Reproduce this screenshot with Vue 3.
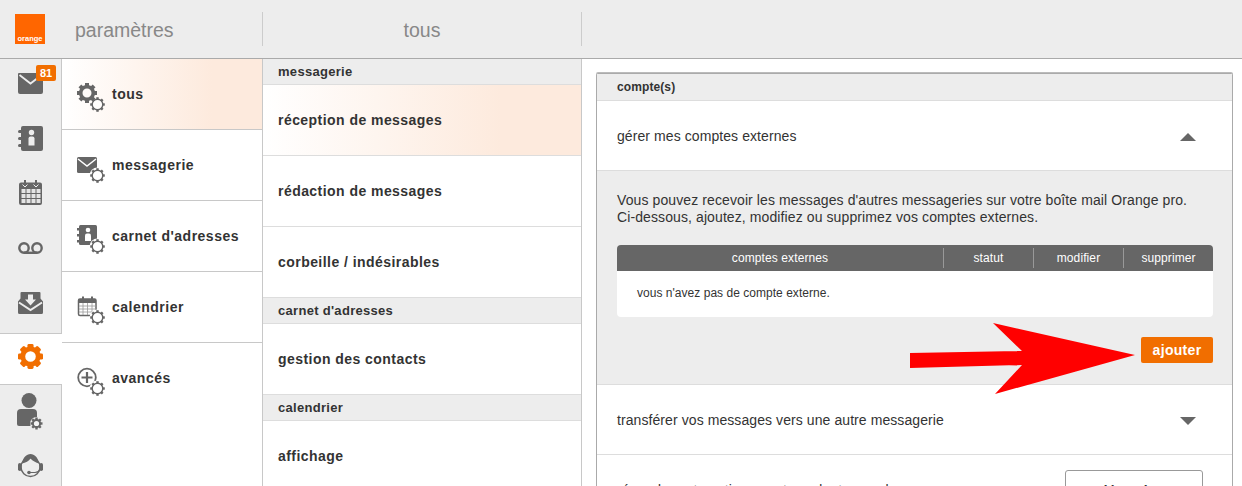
<script setup>
const settings = [
  { label: 'tous', icon: 'gear', active: true },
  { label: 'messagerie', icon: 'mail' },
  { label: "carnet d'adresses", icon: 'book' },
  { label: 'calendrier', icon: 'cal' },
  { label: 'avancés', icon: 'plus' },
]
const groups = [
  { title: 'messagerie', items: [
    { label: 'réception de messages', active: true },
    { label: 'rédaction de messages' },
    { label: 'corbeille / indésirables' },
  ] },
  { title: "carnet d'adresses", items: [{ label: 'gestion des contacts' }] },
  { title: 'calendrier', items: [{ label: 'affichage' }] },
]
const teeth = [0, 45, 90, 135, 180, 225, 270, 315]
const calCells = []
for (let r = 0; r < 3; r++) for (let c = 0; c < 4; c++) calCells.push({ x: 2.5 + c * 5, y: 9 + r * 5 })
</script>

<template>
  <div class="page">
    <header class="top">
      <div class="brand">
        <div class="logo"><span>orange</span></div>
        <div class="title">paramètres</div>
      </div>
      <div class="subtitle">tous</div>
    </header>

    <div class="body">
      <nav class="rail">
        <div class="cell">
          <div class="badge">81</div>
          <svg width="25" height="21" viewBox="0 0 25 21"><path class="ic" d="M1 0h23a1 1 0 0 1 1 1v18a2 2 0 0 1-2 2H2a2 2 0 0 1-2-2V1a1 1 0 0 1 1-1z"/><path d="M1.500 2l11 8.500 11-8.500" fill="none" stroke="#ededed" stroke-width="1.800"/></svg>
        </div>
        <div class="cell">
          <svg width="25" height="25" viewBox="0 0 25 25"><path class="ic" d="M3 2a2 2 0 0 1 2-2h18a2 2 0 0 1 2 2v21a2 2 0 0 1-2 2H5a2 2 0 0 1-2-2z"/><g class="ic"><rect x="0" y="4" width="6" height="3" rx="1.500"/><rect x="0" y="11" width="6" height="3" rx="1.500"/><rect x="0" y="18" width="6" height="3" rx="1.500"/></g><circle cx="13.500" cy="6.500" r="2.700" fill="#ededed"/><path d="M10.500 19.500v-7a2 2 0 0 1 2-2h2a2 2 0 0 1 2 2v7z" fill="#ededed"/></svg>
        </div>
        <div class="cell">
          <svg width="23" height="25" viewBox="0 0 23 25"><path class="ic" d="M2 2.500h19a2 2 0 0 1 2 2v18.500a2 2 0 0 1-2 2H2a2 2 0 0 1-2-2V4.500a2 2 0 0 1 2-2z"/><rect class="ic" x="5" y="0" width="2" height="5"/><rect class="ic" x="16" y="0" width="2" height="5"/><path d="M3.500 4.500l2.500 2.500 2.500-2.500M14.500 4.500l2.500 2.500 2.500-2.500" fill="none" stroke="#ededed" stroke-width="1"/><rect v-for="(c, i) in calCells" :key="i" :x="c.x" :y="c.y" width="4" height="4" fill="#e4e4e4"/></svg>
        </div>
        <div class="cell">
          <svg width="25" height="12" viewBox="0 0 25 12"><circle cx="6" cy="6" r="4.700" fill="none" stroke="#666" stroke-width="2.400"/><circle cx="19" cy="6" r="4.700" fill="none" stroke="#666" stroke-width="2.400"/><path d="M6 10.800h13" stroke="#666" stroke-width="2.400"/></svg>
        </div>
        <div class="cell">
          <svg width="25" height="22" viewBox="0 0 25 22"><path class="ic" d="M3.500 0h18a1 1 0 0 1 1 1v5.500l2.500 3v11a1.500 1.500 0 0 1-1.500 1.500h-22A1.500 1.500 0 0 1 0 20.500v-11l2.500-3V1a1 1 0 0 1 1-1z"/><path d="M1 10.500l11.500 7.500 11.500-7.500" fill="none" stroke="#ededed" stroke-width="2"/><path d="M10 2.500h5v5h3l-5.500 6-5.500-6h3z" fill="#ededed"/></svg>
        </div>
        <div class="cell current">
          <svg width="25" height="25" viewBox="0 0 26 26">
            <rect v-for="t in teeth" :key="t" x="9.800" y="0" width="6.400" height="6" rx="1.500" fill="#f16e00" :transform="`rotate(${t} 13 13)`"/>
            <circle cx="13" cy="13" r="8" fill="none" stroke="#f16e00" stroke-width="5"/>
          </svg>
        </div>
        <div class="cell low">
          <svg width="26" height="37" viewBox="0 0 26 37"><circle cx="12" cy="7.500" r="7.500" class="ic"/><path class="ic" d="M0 20a4 4 0 0 1 4-4h12a4 4 0 0 1 4 4v13H2a2 2 0 0 1-2-2z"/><circle cx="19.500" cy="30.500" r="6.500" fill="#ededed"/><rect v-for="t in teeth" :key="t" x="18.300" y="24.500" width="2.400" height="3" fill="#666" :transform="`rotate(${t} 19.500 30.500)`"/><circle cx="19.500" cy="30.500" r="3.600" fill="#f4f4f4" stroke="#666" stroke-width="2"/></svg>
        </div>
        <div class="cell low">
          <svg width="25" height="25" viewBox="0 0 25 25"><circle cx="12.500" cy="13" r="9.500" fill="none" stroke="#666" stroke-width="1.400"/><path class="ic" d="M4 9.500C5 3.500 8.500 0 12.500 0s7.500 3.500 8.500 9.500c-3-1-6.500-2.500-8.500-5-1.500 2.500-5 4.500-8.500 5z"/><rect class="ic" x="0" y="9" width="3.600" height="8" rx="1.800"/><rect class="ic" x="21.400" y="9" width="3.600" height="8" rx="1.800"/><path d="M11 18.500h6c2 0 4-1 5-3" fill="none" stroke="#666" stroke-width="1.200"/><circle cx="11" cy="18.500" r="1.800" class="ic"/></svg>
        </div>
      </nav>

      <section class="col-settings">
        <div v-for="s in settings" :key="s.label" class="set-row" :class="{ active: s.active }">
          <svg class="set-icon" width="30" height="32" viewBox="0 0 30 32">
            <g v-if="s.icon === 'gear'">
              <rect v-for="t in teeth" :key="t" x="8" y="0" width="4" height="4.500" fill="#666" :transform="`rotate(${t} 10 10)`"/>
              <circle cx="10" cy="10" r="6.300" fill="none" stroke="#666" stroke-width="3.600"/>
            </g>
            <g v-else-if="s.icon === 'mail'">
              <rect x="0" y="3" width="20" height="16" rx="1.500" fill="#666"/>
              <path d="M1 5l9 7L19 5" fill="none" stroke="#fff" stroke-width="1.500"/>
            </g>
            <g v-else-if="s.icon === 'book'">
              <rect x="2" y="0" width="18" height="20" rx="1.500" fill="#666"/>
              <path d="M0 3h3v2.500H0zM0 9h3v2.500H0zM0 15h3v2.500H0z" fill="#666"/>
              <circle cx="11" cy="5" r="2.300" fill="#fff"/>
              <path d="M8 16v-5.500a2 2 0 0 1 2-2h2a2 2 0 0 1 2 2V16z" fill="#fff"/>
            </g>
            <g v-else-if="s.icon === 'cal'">
              <rect x="1.500" y="3" width="17.500" height="16.500" rx="1.500" fill="#fff" stroke="#666" stroke-width="1.500"/>
              <rect x="1.500" y="3" width="17.500" height="4" fill="#666"/>
              <rect x="5" y="0.500" width="2" height="4" fill="#666"/>
              <rect x="14" y="0.500" width="2" height="4" fill="#666"/>
              <path d="M2 10h17M2 13h17M2 16h17M6 7v12M10.500 7v12M15 7v12" fill="none" stroke="#999" stroke-width=".8"/>
            </g>
            <g v-else>
              <circle cx="10" cy="10.500" r="8.800" fill="none" stroke="#666" stroke-width="1.800"/>
              <path d="M10 5v11M4.500 10.500h11" stroke="#666" stroke-width="2.200"/>
            </g>
            <circle cx="20.500" cy="21.500" r="8" fill="#fff" :fill-opacity="s.active ? 0 : 1"/>
            <circle cx="20.500" cy="21.500" r="5.300" fill="#fff" :fill-opacity="s.active ? .5 : 1" stroke="#666" stroke-width="1.400"/>
            <rect v-for="t in teeth" :key="'g' + t" x="19.300" y="14.200" width="2.400" height="2.400" fill="#666" :transform="`rotate(${t} 20.500 21.500)`"/>
          </svg>
          <span>{{ s.label }}</span>
        </div>
      </section>

      <section class="col-sub">
        <template v-for="g in groups" :key="g.title">
          <div class="sub-head">{{ g.title }}</div>
          <div v-for="i in g.items" :key="i.label" class="sub-row" :class="{ active: i.active }">{{ i.label }}</div>
        </template>
      </section>

      <main class="content">
        <div class="panel">
          <div class="panel-head">compte(s)</div>
          <div class="acc-row">
            <span>gérer mes comptes externes</span>
            <i class="caret up"></i>
          </div>
          <div class="acc-body">
            <p>Vous pouvez recevoir les messages d'autres messageries sur votre boîte mail Orange pro.<br>Ci-dessous, ajoutez, modifiez ou supprimez vos comptes externes.</p>
            <div class="table">
              <div class="thead">
                <div class="th th-name">comptes externes</div>
                <div class="th th-st">statut</div>
                <div class="th th-mod">modifier</div>
                <div class="th th-del">supprimer</div>
              </div>
              <div class="tbody">vous n'avez pas de compte externe.</div>
            </div>
            <div class="actions"><button class="add" type="button">ajouter</button></div>
          </div>
          <div class="acc-row">
            <span>transférer vos messages vers une autre messagerie</span>
            <i class="caret down"></i>
          </div>
          <div class="acc-row last">
            <span>répondre automatiquement pendant mon absence</span>
            <div class="ghost">désactiver</div>
          </div>
        </div>
      </main>
    </div>

    <svg class="arrow" width="240" height="80" viewBox="0 0 240 80">
      <path d="M0 33L112 31 83 3 225 35 85 74 112 45 0 48z" fill="#f00"/>
    </svg>
  </div>
</template>

<style>
html, body { margin: 0; background: #fff; }
</style>

<style scoped>
.page {
  position: relative;
  width: 1242px;
  height: 486px;
  overflow: hidden;
  font-family: "Liberation Sans", Arial, sans-serif;
  color: #333;
  background: #fff;
}
.top {
  display: flex;
  align-items: stretch;
  box-sizing: border-box;
  height: 59px;
  padding: 12px 0;
  background: #ededed;
  border-bottom: 1px solid #aaa;
}
.brand {
  display: flex;
  align-items: center;
  gap: 30px;
  box-sizing: border-box;
  width: 263px;
  padding-left: 15px;
  border-right: 1px solid #ccc;
}
.logo {
  display: flex;
  align-items: flex-end;
  justify-content: center;
  width: 30px;
  height: 30px;
  background: #f60;
}
.logo span {
  color: #fff;
  font-size: 7.500px;
  font-weight: 700;
  line-height: 10px;
}
.title {
  margin-top: 2px;
  font-size: 19.500px;
  color: #888;
}
.subtitle {
  box-sizing: border-box;
  width: 319px;
  border-right: 1px solid #ccc;
  font-size: 19.500px;
  line-height: 36px;
  color: #888;
  text-align: center;
}
.body { display: flex; height: 427px; }
.rail {
  display: flex;
  flex-direction: column;
  flex: none;
  width: 62px;
  background: #ededed;
}
.cell {
  position: relative;
  display: flex;
  flex: none;
  align-items: center;
  justify-content: center;
  box-sizing: border-box;
  width: 62px;
  height: 54.800px;
  padding: 0 1px 6px 0;
  border-right: 1px solid #c8c8c8;
}
.cell.low { padding-bottom: 2px; }
.cell.current {
  height: 52px;
  padding: 0 2px 5px 0;
  background: #fff;
  border-top: 1px solid #c8c8c8;
  border-bottom: 1px solid #c8c8c8;
  border-right: 0;
}
.ic { fill: #666; }
.badge {
  position: absolute;
  top: 6px;
  left: 36px;
  width: 20px;
  height: 16px;
  border-radius: 2px;
  background: #f16e00;
  color: #fff;
  font-size: 11px;
  font-weight: 700;
  line-height: 16px;
  text-align: center;
  z-index: 1;
}
.col-settings {
  flex: none;
  box-sizing: border-box;
  width: 201px;
  border-right: 1px solid #c8c8c8;
}
.set-row {
  display: flex;
  align-items: center;
  box-sizing: border-box;
  height: 71px;
  padding: 0 0 0 15px;
  border-bottom: 1px solid #c8c8c8;
  font-size: 14px;
  font-weight: 700;
  letter-spacing: .5px;
  color: #333;
}
.set-row:last-child { border-bottom-color: transparent; }
.set-row span { margin-left: 5px; }
.set-icon { flex: none; margin-top: 10px; }
.active { background: linear-gradient(90deg, #fff 0%, #fdeadd 75%, #fdeadd 100%); }
.col-sub {
  flex: none;
  box-sizing: border-box;
  width: 319px;
  border-right: 1px solid #c8c8c8;
}
.sub-head {
  box-sizing: border-box;
  height: 26px;
  padding-left: 15px;
  background: #ededed;
  border-bottom: 1px solid #ddd;
  font-size: 13px;
  font-weight: 700;
  letter-spacing: .3px;
  line-height: 25px;
}
.sub-row {
  display: flex;
  align-items: center;
  box-sizing: border-box;
  height: 71px;
  padding-left: 15px;
  border-bottom: 1px solid #ddd;
  font-size: 14px;
  font-weight: 700;
  letter-spacing: .45px;
}
.sub-row:last-child { border-bottom-color: transparent; }
.content { flex: 1; padding: 14px 9px 0 14px; min-width: 0; }
.panel {
  border: 1px solid #aaa;
  border-bottom: 0;
  border-radius: 2px 2px 0 0;
  box-shadow: 0 -1px 0 #bbb;
}
.panel-head {
  box-sizing: border-box;
  height: 27px;
  padding-left: 20px;
  background: #ededed;
  border-bottom: 1px solid #ddd;
  font-size: 12px;
  font-weight: 700;
  letter-spacing: .1px;
  line-height: 26px;
}
.acc-row {
  display: flex;
  align-items: center;
  justify-content: space-between;
  box-sizing: border-box;
  height: 70px;
  padding: 0 36px 0 20px;
  border-bottom: 1px solid #ddd;
  font-size: 14px;
  letter-spacing: .08px;
}
.acc-row.last {
  align-items: flex-start;
  padding: 27px 29px 0 20px;
  border-bottom: 0;
}
.ghost {
  box-sizing: border-box;
  flex: none;
  width: 138px;
  height: 40px;
  margin-top: -12px;
  border: 1px solid #999;
  border-radius: 3px;
  font-size: 14px;
  font-weight: 700;
  text-align: center;
  line-height: 40px;
}
.caret {
  width: 0;
  height: 0;
  margin-top: 2px;
  border-left: 8px solid transparent;
  border-right: 8px solid transparent;
}
.caret.up { border-bottom: 8px solid #666; }
.caret.down { border-top: 8px solid #666; }
.acc-body {
  box-sizing: border-box;
  height: 214px;
  padding: 21px 19px 0 20px;
  background: #ededed;
  border-bottom: 1px solid #ddd;
}
.acc-body p {
  margin: 0 0 19px;
  font-size: 14px;
  letter-spacing: .1px;
  line-height: 17px;
}
.table { border-radius: 4px; overflow: hidden; }
.thead {
  display: flex;
  align-items: center;
  height: 26px;
  background: #666;
  color: #fff;
  font-size: 12px;
  letter-spacing: .1px;
}
.th {
  box-sizing: border-box;
  height: 20px;
  line-height: 20px;
  text-align: center;
  border-right: 1px solid #999;
}
.th-name { width: 327px; }
.th-st { width: 90px; }
.th-mod { width: 90px; }
.th-del { flex: 1; border-right: 0; }
.tbody {
  box-sizing: border-box;
  height: 46px;
  padding: 15px 0 0 20px;
  background: #fff;
  font-size: 12px;
  letter-spacing: .03px;
}
.actions { display: flex; justify-content: flex-end; margin-top: 20px; }
.add {
  width: 72px;
  height: 26px;
  padding: 0;
  border: 0;
  border-radius: 2px;
  background: #f16e00;
  color: #fff;
  font-family: inherit;
  font-size: 14px;
  font-weight: 700;
  letter-spacing: .3px;
}
.arrow { position: absolute; left: 910px; top: 320px; }
</style>
